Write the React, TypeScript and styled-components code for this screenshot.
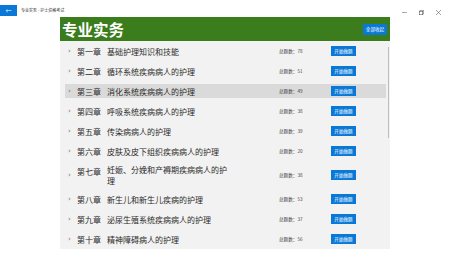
import React from "react";
import styled, { createGlobalStyle } from "styled-components";

type Chapter = {
  label: string;
  title: string;
  total: number;
};

const chapters: Chapter[] = [
  { label: "第一章", title: "基础护理知识和技能", total: 78 },
  { label: "第二章", title: "循环系统疾病病人的护理", total: 51 },
  { label: "第三章", title: "消化系统疾病病人的护理", total: 49 },
  { label: "第四章", title: "呼吸系统疾病病人的护理", total: 38 },
  { label: "第五章", title: "传染病病人的护理", total: 39 },
  { label: "第六章", title: "皮肤及皮下组织疾病病人的护理", total: 20 },
  { label: "第七章", title: "妊娠、分娩和产褥期疾病病人的护理", total: 38 },
  { label: "第八章", title: "新生儿和新生儿疾病的护理", total: 53 },
  { label: "第九章", title: "泌尿生殖系统疾病病人的护理", total: 37 },
  { label: "第十章", title: "精神障碍病人的护理", total: 56 },
];

const GlobalStyle = createGlobalStyle`
  html, body {
    margin: 0;
    padding: 0;
    background: #ffffff;
    font-family: "Noto Sans CJK SC", "Noto Sans", sans-serif;
  }
`;

const Window = styled.div`
  width: 450px;
  height: 253px;
  overflow: hidden;
  background: #ffffff;
`;

const TitleBar = styled.div`
  height: 17px;
  display: flex;
  align-items: flex-end;
`;

const BackButton = styled.div`
  width: 17px;
  height: 11px;
  background: #0a78d6;
  color: #ffffff;
  font-size: 6px;
  display: flex;
  align-items: center;
  justify-content: center;
  margin-bottom: 1px;
`;

const AppTitle = styled.div`
  margin-left: 4px;
  font-size: 4px;
  color: #333333;
  flex: 1;
  line-height: 13px;
`;

const WinControls = styled.div`
  display: flex;
  align-self: center;
  margin-top: 8px;
  margin-right: 3px;
`;

const WinControl = styled.div`
  width: 17px;
  display: flex;
  justify-content: center;
  align-items: center;
`;

const Panel = styled.div`
  margin-left: 60px;
  width: 330px;
  position: relative;
`;

const Header = styled.div`
  height: 24px;
  background: #3b7c1d;
  display: flex;
  align-items: center;
  justify-content: space-between;
  padding: 0 3px 0 2px;
`;

const HeaderTitle = styled.div`
  color: #ffffff;
  font-size: 15.5px;
  font-weight: 700;
  line-height: 24px;
`;

const BlueButton = styled.div<{ $w: number; $h: number }>`
  width: ${(p) => p.$w}px;
  height: ${(p) => p.$h}px;
  background: #0a78d6;
  color: #ffffff;
  font-size: 4.6px;
  display: flex;
  align-items: center;
  justify-content: center;
  white-space: nowrap;
`;

const List = styled.div`
  height: 208px;
  box-sizing: border-box;
  background: #f2f2f2;
  overflow: hidden;
  padding: 3px 4px 0 5px;
  display: flex;
  flex-direction: column;
  gap: 6px;
`;

const Row = styled.div<{ $active?: boolean }>`
  flex: none;
  min-height: 14px;
  background: ${(p) => (p.$active ? "#dadada" : "transparent")};
  display: grid;
  grid-template-columns: 12px 30px 124px 48px 52px 1fr;
  align-items: center;
`;

const Chevron = styled.span`
  color: #6a6a6a;
  font-size: 7px;
  padding-left: 3px;
  font-family: "DejaVu Sans", sans-serif;
`;

const Label = styled.span`
  align-self: start;
  padding-top: 1.5px;
  font-size: 8px;
  line-height: 11px;
  color: #2a2a2a;
`;

const Title = styled.span`
  font-size: 8px;
  line-height: 11px;
  color: #2a2a2a;
`;

const Total = styled.span`
  grid-column: 5;
  font-size: 4.6px;
  color: #444444;
  white-space: nowrap;
`;

const ScrollThumb = styled.div`
  position: absolute;
  right: 1px;
  top: 30px;
  width: 1.5px;
  height: 91px;
  background: #bdbdbd;
`;

export default function App() {
  return (
    <>
      <GlobalStyle />
      <Window>
        <TitleBar>
          <BackButton>←</BackButton>
          <AppTitle>专业实务 - 护士资格考试</AppTitle>
          <WinControls>
            <WinControl>
              <svg width="5" height="5" viewBox="0 0 10 10">
                <line x1="0" y1="5" x2="10" y2="5" stroke="#555" strokeWidth="1" />
              </svg>
            </WinControl>
            <WinControl>
              <svg width="5" height="5" viewBox="0 0 10 10">
                <rect x="0.5" y="2.5" width="7" height="7" fill="none" stroke="#555" strokeWidth="1.2" />
                <polyline points="2.5,2.5 2.5,0.5 9.5,0.5 9.5,7.5 7.5,7.5" fill="none" stroke="#555" strokeWidth="1.2" />
              </svg>
            </WinControl>
            <WinControl>
              <svg width="5" height="5" viewBox="0 0 10 10">
                <line x1="0" y1="0" x2="10" y2="10" stroke="#555" strokeWidth="1.1" />
                <line x1="10" y1="0" x2="0" y2="10" stroke="#555" strokeWidth="1.1" />
              </svg>
            </WinControl>
          </WinControls>
        </TitleBar>
        <Panel>
          <Header>
            <HeaderTitle>专业实务</HeaderTitle>
            <BlueButton $w={24} $h={11}>全部收起</BlueButton>
          </Header>
          <List>
            {chapters.map((c, i) => (
              <Row key={c.label} $active={i === 2}>
                <Chevron>›</Chevron>
                <Label>{c.label}</Label>
                <Title>{c.title}</Title>
                <Total>总题数：{c.total}</Total>
                <BlueButton $w={25} $h={10}>开始做题</BlueButton>
              </Row>
            ))}
          </List>
          <ScrollThumb />
        </Panel>
      </Window>
    </>
  );
}
